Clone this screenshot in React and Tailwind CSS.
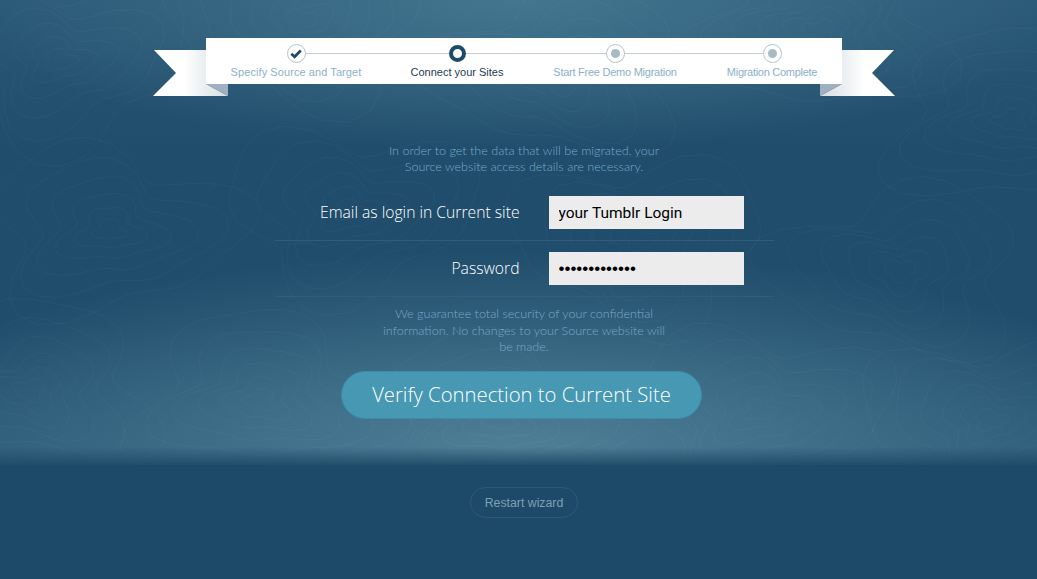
import React from 'react';

const steps = [
    { label: 'Specify Source and Target', state: 'done', gap: 'ml-[20px]', track: 'tracking-[0.08px]' },
    { label: 'Connect your Sites', state: 'active', gap: 'ml-[21px]', track: 'tracking-normal' },
    { label: 'Start Free Demo Migration', state: 'todo', gap: 'ml-[18px]', track: 'tracking-[-0.25px]' },
    { label: 'Migration Complete', state: 'todo', gap: 'ml-[17px]', track: 'tracking-[-0.28px]' },
];

// contour lines of the background texture
const ring = (cx, cy, r, seed) => {
    const pts = [];
    for (let i = 0; i <= 40; i++) {
        const a = (i / 40) * Math.PI * 2;
        const w = 1 + 0.22 * Math.sin(a * 3 + seed) + 0.12 * Math.sin(a * 5 + seed * 2);
        pts.push(`${(cx + Math.cos(a) * r * 1.5 * w).toFixed(1)},${(cy + Math.sin(a) * r * w).toFixed(1)}`);
    }
    return `M${pts.join('L')}Z`;
};

const centers = [
    [60, 60, 1], [300, 20, 2], [560, 70, 3], [820, 30, 4], [1010, 120, 5],
    [110, 230, 6], [350, 210, 7], [640, 240, 8], [900, 270, 9],
    [30, 390, 10], [260, 400, 11], [500, 420, 12], [760, 410, 13], [990, 420, 14],
];

const Contours = () => (
    <svg className="absolute left-0 top-0 h-[465px] w-full" viewBox="0 0 1037 465" fill="none" stroke="#ffffff" strokeOpacity="0.03">
        {centers.map(([x, y, s]) =>
            [10, 20, 32, 46, 62, 80].map((r) => <path key={`${s}-${r}`} d={ring(x, y, r, s + r / 40)} />)
        )}
    </svg>
);

const RibbonEnd = ({ flip }) => (
    <svg
        className={`absolute top-[12px] h-[46px] w-[76px] ${flip ? 'right-[-54px] -scale-x-100' : 'left-[-54px]'}`}
        viewBox="0 0 76 46"
    >
        <defs>
            <linearGradient id={flip ? 'ribR' : 'ribL'} x1="0" x2="1" y1="0" y2="0">
                <stop offset="0.4" stopColor="#ffffff" />
                <stop offset="1" stopColor="#d5dce1" />
            </linearGradient>
        </defs>
        <polygon points="2,0 54,0 54,34 76,46 1,46 24,23" fill={`url(#${flip ? 'ribR' : 'ribL'})`} />
        <polygon points="54,34 76,34 76,46" fill="#9fb1c0" />
    </svg>
);

const StepIcon = ({ state }) => {
    if (state === 'active') {
        return <div className="h-[17px] w-[17px] rounded-full border-[4px] border-[#1d4a68] bg-white" />;
    }
    if (state === 'done') {
        return (
            <div className="flex h-[19px] w-[19px] items-center justify-center rounded-full border border-[#b4c4cf] bg-white">
                <svg width="12" height="10" viewBox="0 0 12 10" fill="none">
                    <path d="M1.3 4.8 4.6 7.8 10.8 1.6" stroke="#1d4a68" strokeWidth="2.8" />
                </svg>
            </div>
        );
    }
    return (
        <div className="flex h-[19px] w-[19px] items-center justify-center rounded-full border border-[#b4c4cf] bg-white">
            <div className="h-[9px] w-[9px] rounded-full bg-[#a8bac6]" />
        </div>
    );
};

const Row = ({ label, type, value, font }) => (
    <div className="mb-[11px] flex h-[45px] w-[499px] items-start border-b border-[#2f5d7a]">
        <label className="w-[245px] pt-[5px] text-right font-['Open_Sans',sans-serif] text-[15.7px] font-light leading-[22px] text-white">
            {label}
        </label>
        <input
            readOnly
            type={type}
            defaultValue={value}
            className={`ml-[29px] h-[33px] w-[195px] bg-[#ececec] px-[10px] text-black outline-none ${font}`}
        />
    </div>
);

export default function App() {
    return (
        <div className="relative h-[579px] overflow-hidden bg-[#1d4a68]">
            <div className="absolute inset-x-0 top-0 h-[465px] bg-[radial-gradient(ellipse_560px_150px_at_520px_0px,#44768f_0%,#1f4d6b00_100%),radial-gradient(ellipse_680px_200px_at_520px_450px,#4f7f97_0%,#1f4d6b00_100%),linear-gradient(#2a5877,#1f4d6b_32%,#1f4d6b_70%,#2b5a77)]" />
            <Contours />
            <div className="absolute inset-x-0 top-[447px] h-[20px] bg-gradient-to-b from-[#1d4a6800] to-[#1d4a68]" />

            <div className="relative flex flex-col items-center pl-[11px] pt-[38px]">
                <div className="relative h-[46px] w-[636px]">
                    <RibbonEnd />
                    <RibbonEnd flip />
                    <div className="relative flex h-full bg-white">
                        <div className="absolute left-[90px] top-[15px] h-px w-[476px] bg-[#c3ccd3]" />
                        {steps.map((s) => (
                            <div key={s.label} className={`relative flex w-[140px] flex-col items-center ${s.gap}`}>
                                <div className="flex h-[31px] items-center">
                                    <StepIcon state={s.state} />
                                </div>
                                <span
                                    className={`whitespace-nowrap font-['Liberation_Sans',sans-serif] text-[11px] leading-[6px] ${s.track} ${
                                        s.state === 'active' ? 'text-[#1d3a50]' : 'text-[#8cb0cb]'
                                    }`}
                                >
                                    {s.label}
                                </span>
                            </div>
                        ))}
                    </div>
                </div>

                <p className="mt-[59px] w-[300px] text-center font-['Lato',sans-serif] text-[12.6px] font-light leading-[16px] text-[#78a8ca]">
                    In order to get the data that will be migrated, your
                    <br />
                    Source website access details are necessary.
                </p>

                <form className="mt-[21px] flex flex-col">
                    <Row label="Email as login in Current site" type="text" value="your Tumblr Login" font="font-['Roboto',sans-serif] text-[15.5px]" />
                    <Row label="Password" type="password" value="yourpassword1" font="font-['Liberation_Sans',sans-serif] text-[17px]" />
                </form>

                <p className="mt-[-2px] w-[320px] text-center font-['Lato',sans-serif] text-[12.6px] font-light leading-[16.5px] text-[#78a8ca]">
                    We guarantee total security of your confidential
                    <br />
                    information. No changes to your Source website will
                    <br />
                    be made.
                </p>

                <button className="mt-[15px] mr-[5px] h-[48px] w-[361px] rounded-full border border-[#3f8aa6] bg-[#4698b3] font-['Open_Sans',sans-serif] text-[20.3px] font-light text-white">
                    Verify Connection to Current Site
                </button>

                <button className="mt-[68px] h-[31px] w-[108px] rounded-full border border-[#2f5a76] pt-[2px] font-['Liberation_Sans',sans-serif] text-[12.3px] text-[#7fa0b5]">
                    Restart wizard
                </button>
            </div>
        </div>
    );
}
